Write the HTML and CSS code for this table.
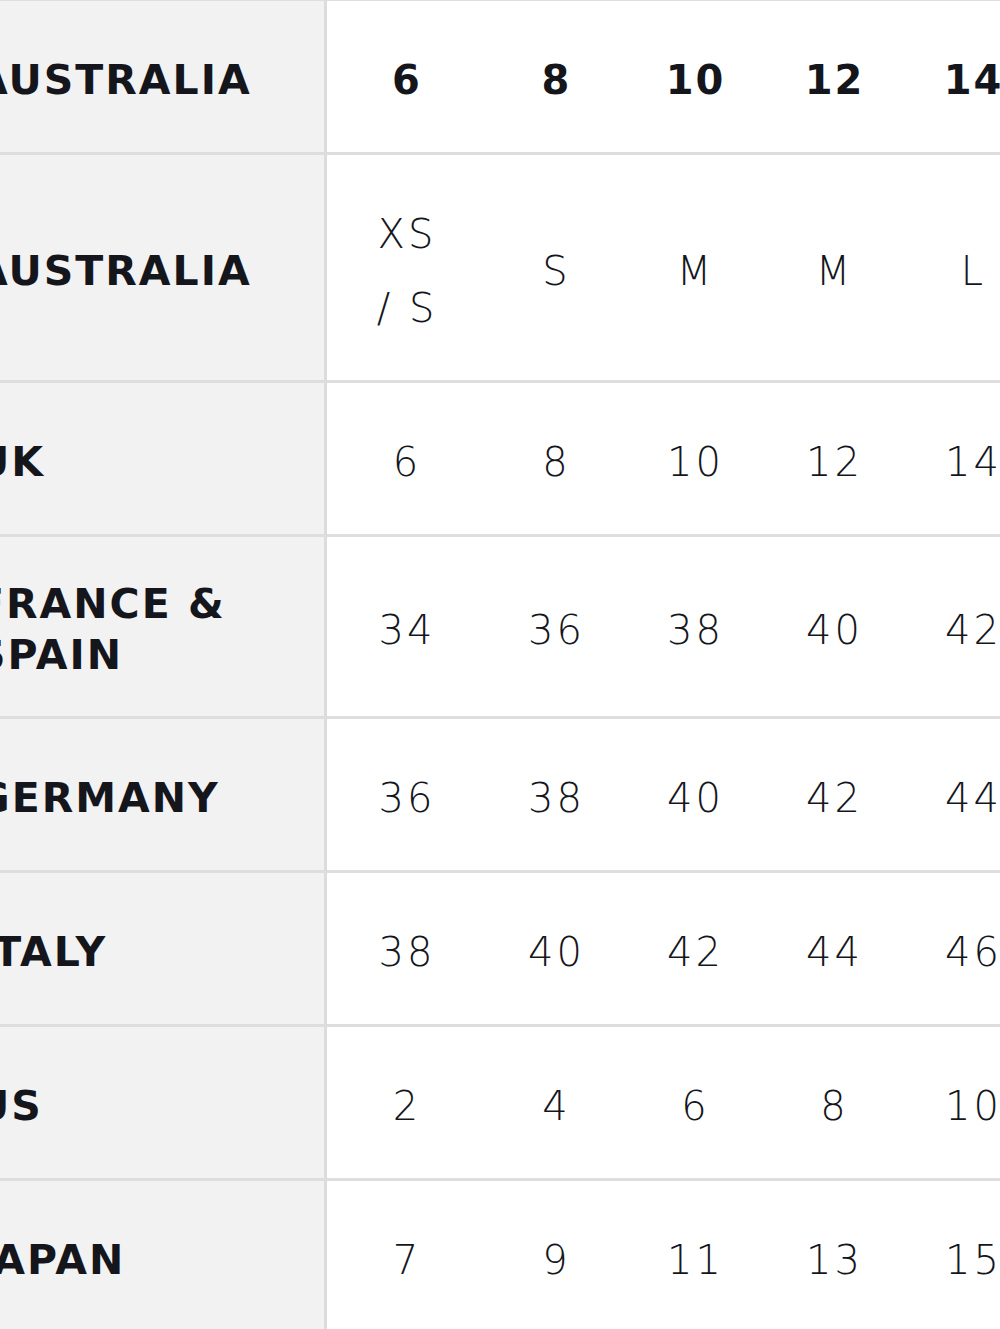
FILE: index.html
```html
<!DOCTYPE html>
<html lang="en">
<head>
<meta charset="utf-8">
<title>Size guide</title>
<link rel="stylesheet" href="styles.css">
</head>
<body>
<div class="viewport">
  <table class="size-table">
    <colgroup>
      <col class="col-label">
      <col class="col-first">
      <col class="col-size">
      <col class="col-size">
      <col class="col-size">
      <col class="col-size">
    </colgroup>
    <thead>
      <tr class="head-row">
        <th scope="row" class="label">AUSTRALIA</th>
        <th scope="col" class="num">6</th>
        <th scope="col" class="num">8</th>
        <th scope="col" class="num">10</th>
        <th scope="col" class="num">12</th>
        <th scope="col" class="num">14</th>
      </tr>
    </thead>
    <tbody>
      <tr>
        <th scope="row" class="label">AUSTRALIA</th>
        <td class="val">XS /&nbsp;S</td>
        <td class="val">S</td>
        <td class="val">M</td>
        <td class="val">M</td>
        <td class="val">L</td>
      </tr>
      <tr>
        <th scope="row" class="label">UK</th>
        <td class="val">6</td>
        <td class="val">8</td>
        <td class="val">10</td>
        <td class="val">12</td>
        <td class="val">14</td>
      </tr>
      <tr>
        <th scope="row" class="label">FRANCE &amp; SPAIN</th>
        <td class="val">34</td>
        <td class="val">36</td>
        <td class="val">38</td>
        <td class="val">40</td>
        <td class="val">42</td>
      </tr>
      <tr>
        <th scope="row" class="label">GERMANY</th>
        <td class="val">36</td>
        <td class="val">38</td>
        <td class="val">40</td>
        <td class="val">42</td>
        <td class="val">44</td>
      </tr>
      <tr>
        <th scope="row" class="label">ITALY</th>
        <td class="val">38</td>
        <td class="val">40</td>
        <td class="val">42</td>
        <td class="val">44</td>
        <td class="val">46</td>
      </tr>
      <tr>
        <th scope="row" class="label">US</th>
        <td class="val">2</td>
        <td class="val">4</td>
        <td class="val">6</td>
        <td class="val">8</td>
        <td class="val">10</td>
      </tr>
      <tr>
        <th scope="row" class="label">JAPAN</th>
        <td class="val">7</td>
        <td class="val">9</td>
        <td class="val">11</td>
        <td class="val">13</td>
        <td class="val">15</td>
      </tr>
    </tbody>
  </table>
</div>
</body>
</html>
```
FILE: styles.css
```css
html, body {
  margin: 0;
  padding: 0;
  background: #ffffff;
}

.viewport {
  width: 1000px;
  height: 1329px;
  overflow: hidden;
}

.size-table {
  table-layout: fixed;
  border-collapse: separate;
  border-spacing: 0;
  width: 1107px;
  margin-left: -64px;
  border-top: 1px solid #dedede;
  font-family: "DejaVu Sans", "Liberation Sans", sans-serif;
  color: #15161c;
}

.col-label { width: 391px; }
.col-first { width: 160px; }
.col-size { width: 139px; }

.size-table th,
.size-table td {
  box-sizing: border-box;
  border-bottom: 3px solid #dedede;
  vertical-align: middle;
}

.label {
  background: #f2f2f2;
  border-right: 3px solid #dcdcdc;
  text-align: left;
  padding: 42px 30px 35px 40px;
  font-size: 41px;
  font-weight: 700;
  letter-spacing: 2px;
  line-height: 51px;
}

.num,
.val {
  text-align: center;
  padding: 42px 28px 35px;
  line-height: 74px;
  font-size: 40px;
  letter-spacing: 3px;
}

.num {
  font-weight: 700;
  letter-spacing: 2px;
}

.val {
  font-weight: 300;
}
```
